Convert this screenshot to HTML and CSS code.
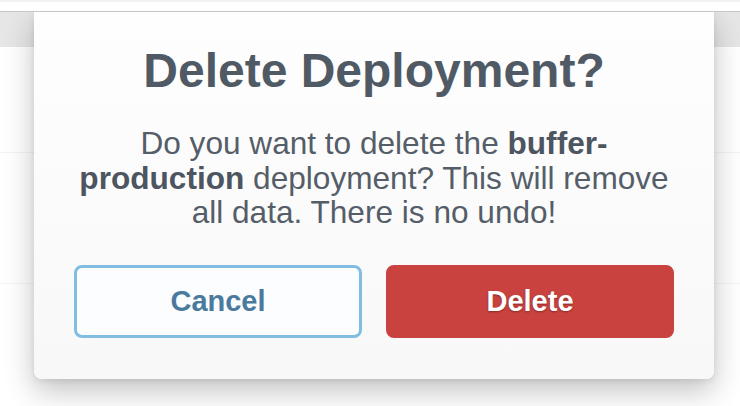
FILE: index.html
```html
<!DOCTYPE html>
<html>
<head>
<meta charset="utf-8">
<link rel="stylesheet" href="styles.css">
</head>
<body>
<div class="page">
  <div class="topbar"></div>
  <div class="table">
    <div class="thead"></div>
    <div class="row row-first"></div>
    <div class="row"></div>
    <div class="row"></div>
  </div>
  <div class="modal">
    <h1 class="title">Delete Deployment?</h1>
    <p class="message">Do you want to delete the <strong>buffer-production</strong> deployment? This will remove all data. There is no undo!</p>
    <div class="actions">
      <button class="btn btn-cancel">Cancel</button>
      <button class="btn btn-delete">Delete</button>
    </div>
  </div>
</div>
</body>
</html>
```
FILE: styles.css
```css
html, body {
  margin: 0;
  padding: 0;
  background: #ffffff;
}
.page {
  position: relative;
  width: 740px;
  height: 406px;
  overflow: hidden;
  font-family: "Liberation Sans", Helvetica, Arial, sans-serif;
}
.topbar {
  height: 9px;
  border-top: 2px solid #f2f2f2;
  border-bottom: 1px solid #c6c6c6;
  background: #ffffff;
  position: relative;
  z-index: 2;
}
.thead {
  height: 35px;
  background: #e6e6e6;
}
.row {
  height: 130px;
  border-bottom: 1px solid #f4f4f4;
}
.row-first {
  height: 105px;
}
.modal {
  position: absolute;
  left: 34px;
  top: 12px;
  width: 600px;
  padding: 31px 40px 41px;
  background: linear-gradient(#fefefe, #f8f8f9);
  border-radius: 0 0 8px 8px;
  box-shadow: 0 12px 30px rgba(0, 0, 0, 0.24), 0 2px 6px rgba(0, 0, 0, 0.08);
  z-index: 1;
  text-align: center;
}
.title {
  margin: 0;
  font-size: 48px;
  line-height: 56px;
  font-weight: 700;
  color: #505a65;
}
.message {
  margin: 27px 0 0;
  font-size: 31.6px;
  line-height: 34.5px;
  color: #555e68;
}
.message strong {
  font-weight: 700;
  color: #4c5560;
}
.actions {
  margin-top: 35px;
  display: flex;
  gap: 24px;
}
.btn {
  flex: 1 1 0;
  min-width: 0;
  height: 73px;
  border-radius: 8px;
  font-family: inherit;
  font-size: 29px;
  font-weight: 700;
  display: flex;
  align-items: center;
  justify-content: center;
  padding: 0;
  box-sizing: border-box;
  border: 3px solid transparent;
}
.btn-cancel {
  background: #fcfdfe;
  border-color: #80bde0;
  color: #4a7b9e;
}
.btn-delete {
  background: #c9423f;
  border-color: #c9423f;
  color: #ffffff;
  text-shadow: 0 1px 2px rgba(0, 0, 0, 0.35);
}
```
